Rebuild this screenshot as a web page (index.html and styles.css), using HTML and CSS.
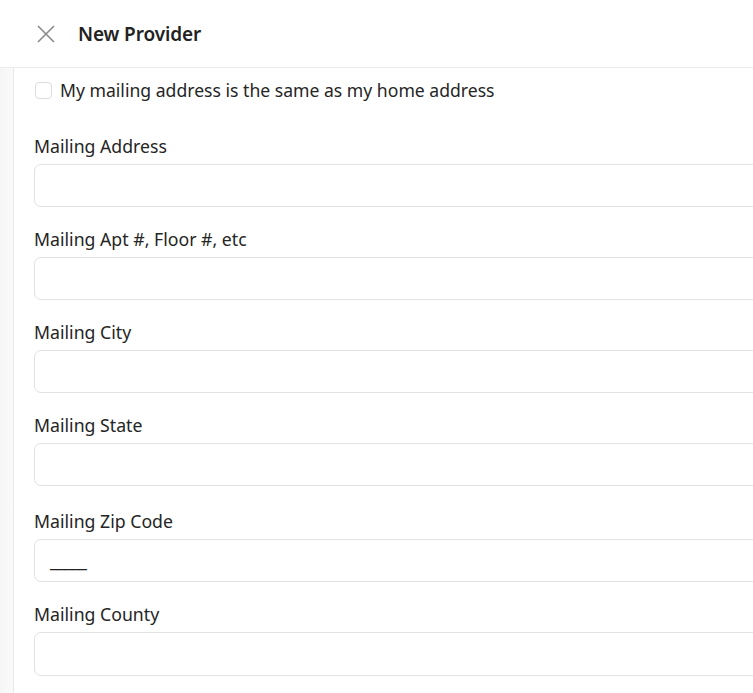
FILE: index.html
```html
<!DOCTYPE html>
<html>
<head>
<meta charset="utf-8">
<link rel="stylesheet" href="styles.css">
</head>
<body>
<header class="topbar">
  <button class="close" aria-label="Close">
    <svg width="18" height="18" viewBox="0 0 18 18"><path d="M1 1L17 17M17 1L1 17" stroke="#8a8a8a" stroke-width="1.6" fill="none"/></svg>
  </button>
  <h1 class="title">New Provider</h1>
</header>
<div class="body">
  <div class="rail"></div>
  <main class="form">
    <label class="check"><span class="box"></span><span>My mailing address is the same as my home address</span></label>
    <div class="field"><div class="label">Mailing Address</div><div class="input"></div></div>
    <div class="field"><div class="label">Mailing Apt #, Floor #, etc</div><div class="input"></div></div>
    <div class="field"><div class="label">Mailing City</div><div class="input"></div></div>
    <div class="field"><div class="label">Mailing State</div><div class="input"></div></div>
    <div class="field zip"><div class="label">Mailing Zip Code</div><div class="input mask"><span>_____</span></div></div>
    <div class="field"><div class="label">Mailing County</div><div class="input"></div></div>
  </main>
</div>
</body>
</html>
```
FILE: styles.css
```css
* { box-sizing: border-box; }
html, body { margin: 0; padding: 0; background: #fff; }
body { font-family: "Noto Sans", "Open Sans", sans-serif; color: #252525; width: 753px; height: 693px; overflow: hidden; }
.topbar { height: 68px; border-bottom: 1px solid #ebebeb; display: flex; align-items: center; padding-left: 37px; }
.close { border: 0; background: none; padding: 0; width: 18px; height: 18px; display: flex; margin-right: 23px; }
.title { margin: 0; font-size: 19px; font-weight: 600; color: #222; letter-spacing: -0.1px; }
.body { display: flex; height: 625px; }
.rail { width: 14px; background: linear-gradient(to right, #f6f6f6, #fafafa); border-right: 1px solid #e9e9e9; flex: none; }
.form { flex: 1; padding: 10px 0 0 20px; margin-right: -30px; }
.check { display: flex; align-items: center; height: 24px; font-size: 17.6px; gap: 8px; margin-bottom: 32px; }
.box { width: 17px; height: 17px; border: 1px solid #dcdce0; border-radius: 4px; margin-left: 1px; }
.field { margin-bottom: 20px; }
.field.zip { margin-top: 23px; }
.label { font-size: 17.7px; line-height: 24px; margin-bottom: 6px; }
.input { height: 43px; border: 1px solid #e1e1e6; border-radius: 7px; }
.field:last-child .input { height: 44px; }
.mask { display: flex; align-items: flex-end; padding: 0 0 11px 15px; font-size: 17.7px; color: #222; letter-spacing: -0.6px; }
.mask span { line-height: 20px; }
```
